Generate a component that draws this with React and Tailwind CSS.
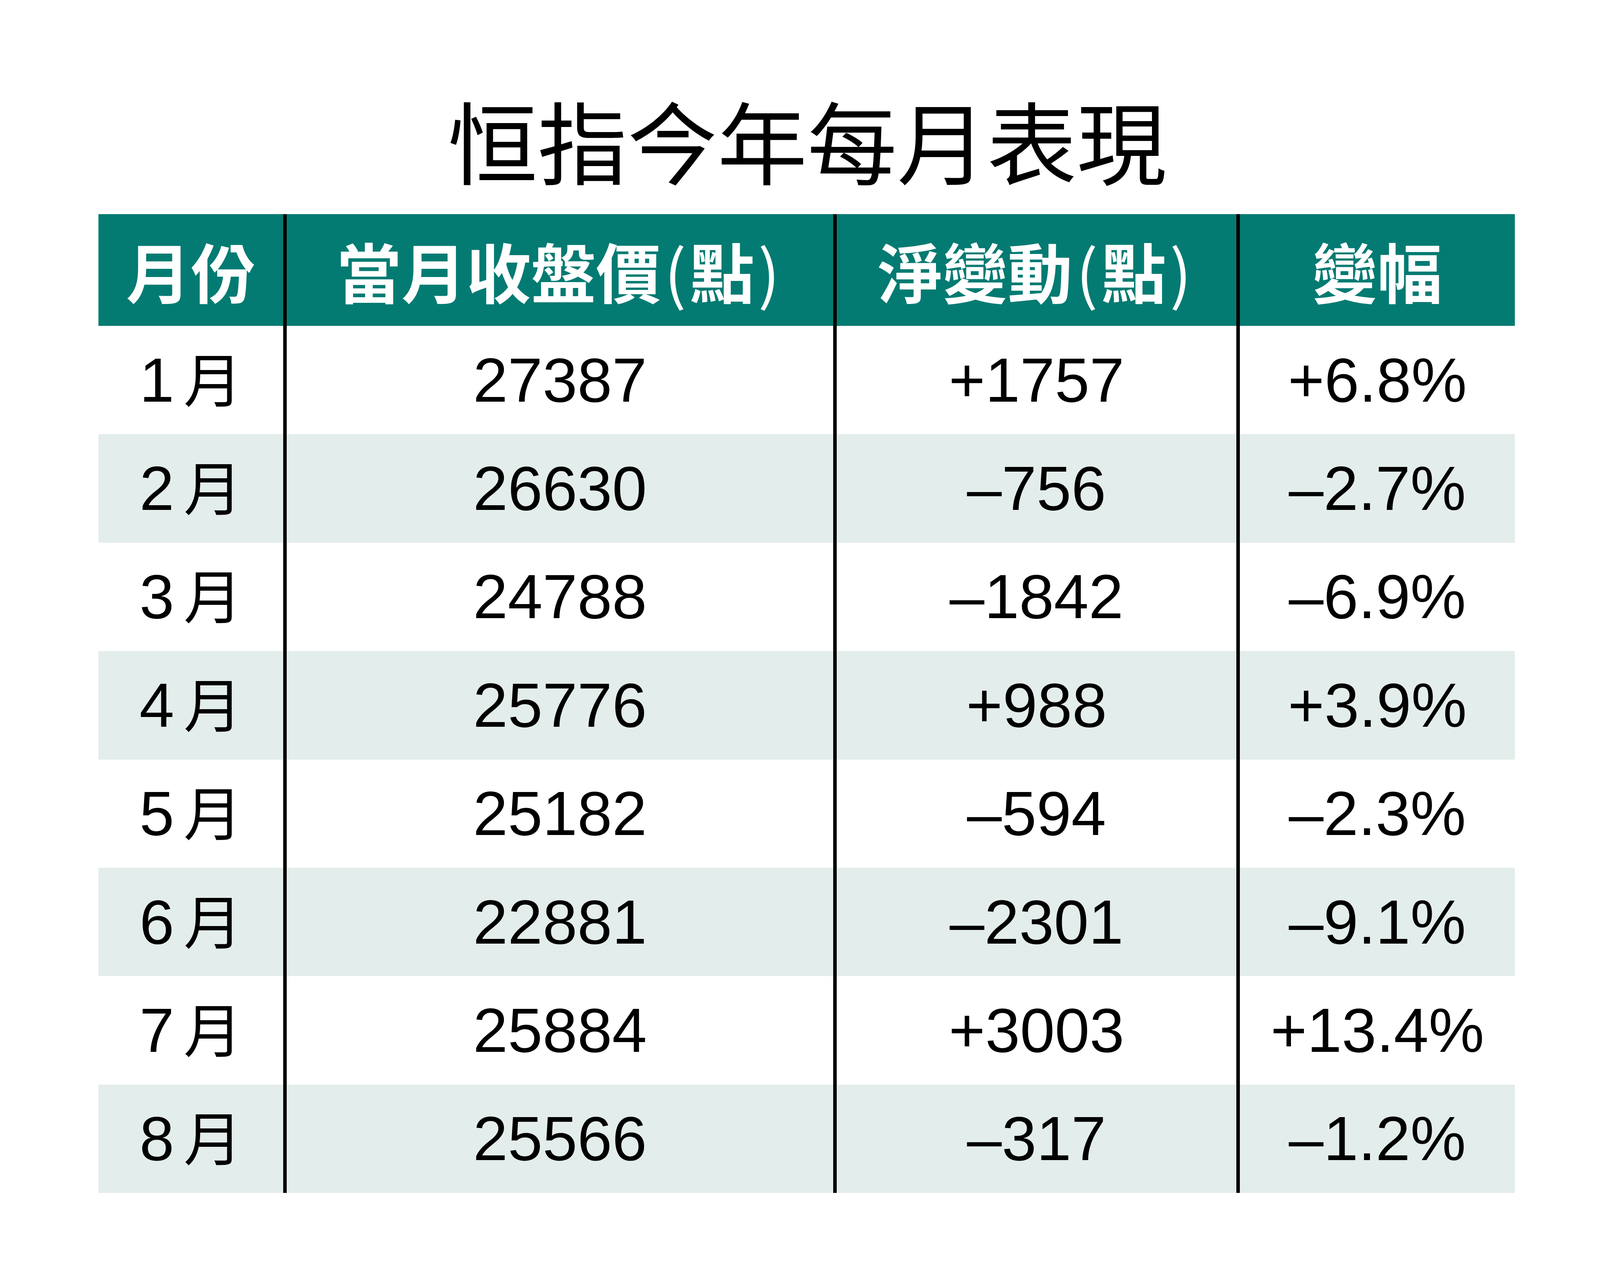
import React from "react";

const rows = [
  ["1", "27387", "+1757", "+6.8%"],
  ["2", "26630", "–756", "–2.7%"],
  ["3", "24788", "–1842", "–6.9%"],
  ["4", "25776", "+988", "+3.9%"],
  ["5", "25182", "–594", "–2.3%"],
  ["6", "22881", "–2301", "–9.1%"],
  ["7", "25884", "+3003", "+13.4%"],
  ["8", "25566", "–317", "–1.2%"],
];

const cjk = { fontFamily: '"Noto Sans CJK TC", "Noto Sans CJK SC", sans-serif' };
const num = { fontFamily: '"Liberation Sans", Arial, "Noto Sans CJK TC", sans-serif' };

const Paren = ({ children }) => <span className="mx-[9px] font-normal">{children}</span>;

const App = () => {
  return (
    <div className="w-[4133px] h-[3258px] bg-white overflow-hidden">
      {/* title */}
      <div className="h-[548px] flex items-start justify-center pt-[240px]">
        <h1 className="text-[230px] leading-none font-normal text-black" style={cjk}>
          恒指今年每月表現
        </h1>
      </div>

      {/* table */}
      <div className="w-[3626px] ml-[252px]">
        <div className="grid grid-cols-[482px_1408px_1032px_704px] h-[286px] bg-[#037b72] text-white font-bold text-[166px] leading-none" style={cjk}>
          <div className="flex items-center justify-center border-r-[9px] border-black">月份</div>
          <div className="flex items-center justify-center border-r-[9px] border-black">
            當月收盤價<Paren>(</Paren>點<Paren>)</Paren>
          </div>
          <div className="flex items-center justify-center border-r-[9px] border-black">
            淨變動<Paren>(</Paren>點<Paren>)</Paren>
          </div>
          <div className="flex items-center justify-center">變幅</div>
        </div>

        {rows.map((r, i) => (
          <div
            key={r[0]}
            className={
              "grid grid-cols-[482px_1408px_1032px_704px] h-[277.4px] text-[160px] leading-none text-black " +
              (i % 2 === 1 ? "bg-[#e3edeb]" : "bg-white")
            }
            style={num}
          >
            <div className="flex items-center justify-center border-r-[9px] border-black">
              <span>{r[0]}</span>
              <span className="ml-6 mb-[18px] text-[150px]" style={cjk}>月</span>
            </div>
            <div className="flex items-center justify-center border-r-[9px] border-black">{r[1]}</div>
            <div className="flex items-center justify-center border-r-[9px] border-black">{r[2]}</div>
            <div className="flex items-center justify-center">{r[3]}</div>
          </div>
        ))}
      </div>
    </div>
  );
};

export default App;
